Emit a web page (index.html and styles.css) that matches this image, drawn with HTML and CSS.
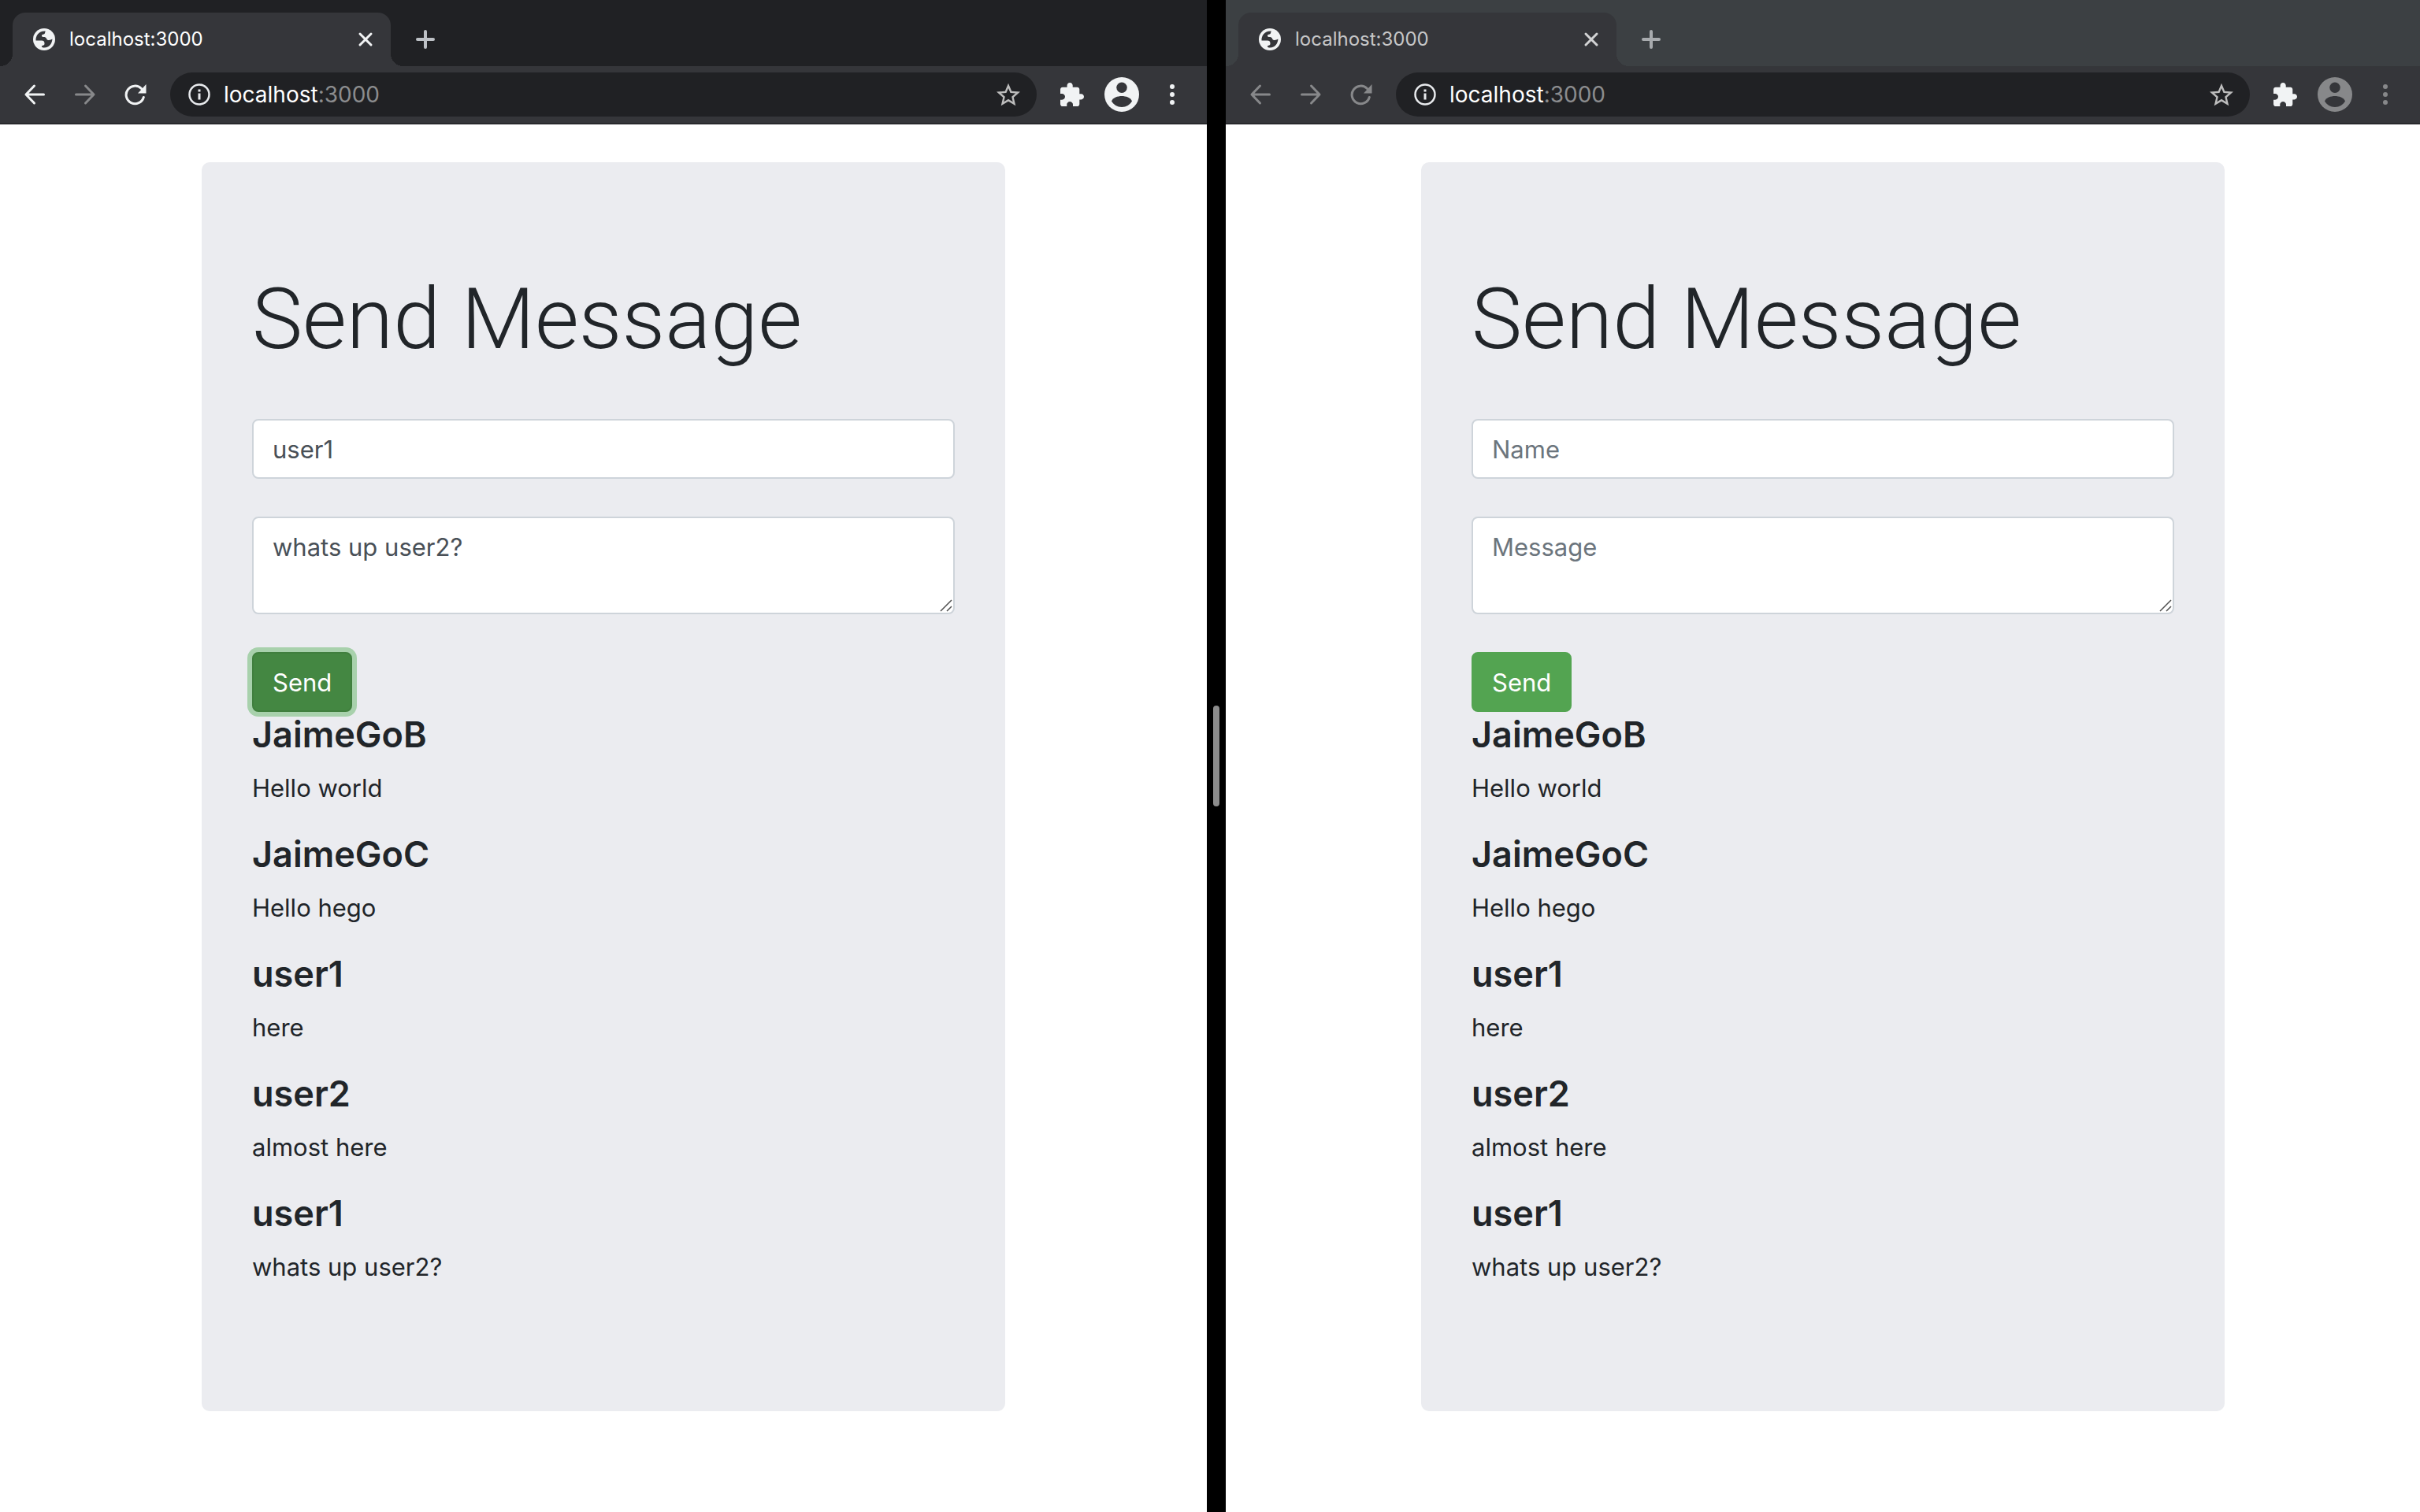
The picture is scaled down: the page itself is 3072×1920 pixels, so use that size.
FILE: index.html
```html
<!DOCTYPE html>
<html lang="en">
<head>
<meta charset="utf-8">
<title>localhost:3000</title>
<link rel="stylesheet" href="styles.css">
</head>
<body>
<svg class="sprite" aria-hidden="true">
  <symbol id="globe" viewBox="0 0 28 28"><circle cx="14" cy="14" r="14" fill="#f1f3f4"/><path fill="#35363a" d="M16 3.500c-1 0-.5 2.500-1.500 3.500-1 1-3 .3-3.500 2-.4 1.500 1 2 2.500 2s3 .4 3.500 2c.4 1.500 1.500 2 3 2 1.700 0 3-1 4.500-1.500C24 19 21 24.500 14 24.500c-1.500 0-2.500-.5-3.200-1.300.2-1.200 1.200-1.500 2.500-1.700 1.200-.3 1.200-1.500 1.200-2.500 0-2.500-1.500-3.500-3.500-3.500H3.500C3 9 8 2.500 16 3.500z"/></symbol>
  <symbol id="close" viewBox="0 0 20 20"><path d="M3 3l14 14M17 3L3 17" fill="none" stroke="currentColor" stroke-width="3" stroke-linecap="round"/></symbol>
  <symbol id="plus" viewBox="0 0 24 24"><path d="M12 2v20M2 12h20" fill="none" stroke="currentColor" stroke-width="4" stroke-linecap="round"/></symbol>
  <symbol id="back" viewBox="0 0 28 28"><path d="M25.500 14H3M13.500 3L3 14l10.500 11" fill="none" stroke="currentColor" stroke-width="3" stroke-linecap="round" stroke-linejoin="round"/></symbol>
  <symbol id="forward" viewBox="0 0 28 28"><path d="M2.500 14H25M14.500 3L25 14 14.500 25" fill="none" stroke="currentColor" stroke-width="3" stroke-linecap="round" stroke-linejoin="round"/></symbol>
  <symbol id="reload" viewBox="0 0 28 28"><path d="M24.300 17.500A11.300 11.300 0 1 1 21.500 6.500" fill="none" stroke="currentColor" stroke-width="3" stroke-linecap="round"/><path d="M27.500 1v11.500H17z" fill="currentColor"/></symbol>
  <symbol id="info" viewBox="0 0 28 28"><circle cx="14" cy="14" r="12.500" fill="none" stroke="currentColor" stroke-width="2.500"/><path d="M12.500 7.500h3v3h-3zM12.500 12.500h3v8h-3z" fill="currentColor"/></symbol>
  <symbol id="star" viewBox="2 2 20 19"><path fill="currentColor" d="M22 9.240l-7.190-.62L12 2 9.190 8.630 2 9.240l5.460 4.730L5.820 21 12 17.270 18.180 21l-1.630-7.030L22 9.240zM12 15.400l-3.760 2.270 1-4.280-3.320-2.880 4.380-.38L12 6.100l1.710 4.040 4.380.38-3.320 2.880 1 4.280L12 15.400z"/></symbol>
  <symbol id="puzzle" viewBox="2 1 21 21"><path fill="currentColor" d="M20.500 11H19V7c0-1.100-.9-2-2-2h-4V3.500C13 2.120 11.880 1 10.500 1S8 2.120 8 3.500V5H4c-1.100 0-1.990.9-1.990 2v3.800H3.500c1.490 0 2.700 1.210 2.700 2.700s-1.210 2.700-2.700 2.700H2V20c0 1.100.9 2 2 2h3.800v-1.500c0-1.490 1.210-2.700 2.700-2.700 1.490 0 2.700 1.210 2.700 2.700V22H17c1.100 0 2-.9 2-2v-4h1.500c1.380 0 2.500-1.120 2.500-2.500S21.880 11 20.500 11z"/></symbol>
  <symbol id="person" viewBox="0 0 44 44"><circle cx="22" cy="22" r="22" fill="currentColor"/><circle cx="22" cy="13.300" r="6.700" fill="#35363a"/><path fill="#35363a" d="M9 30.500C10.500 26 17 24 22 24s11.500 2 13 6.500c-2.500 4.500-7.500 7.500-13 7.500S11.500 35 9 30.500z"/></symbol>
  <symbol id="dots" viewBox="0 0 8 28"><g fill="currentColor"><circle cx="4" cy="4" r="3"/><circle cx="4" cy="14" r="3"/><circle cx="4" cy="24" r="3"/></g></symbol>
  <symbol id="resize" viewBox="0 0 16 16"><path d="M1 15L15 1M9 15l6-6" fill="none" stroke="#505050" stroke-width="1.500"/></symbol>
</svg>
<div class="screen">
  <section class="window" aria-label="First window">
    <header>
      <div class="tabstrip">
        <div class="tab">
          <svg class="i28"><use href="#globe"/></svg>
          <span class="tab-title">localhost:3000</span>
          <button class="icon" aria-label="Close tab"><svg class="i20"><use href="#close"/></svg></button>
        </div>
        <button class="icon new-tab" aria-label="New tab"><svg class="i24"><use href="#plus"/></svg></button>
      </div>
      <nav class="toolbar">
        <div class="nav-buttons">
          <button class="icon" aria-label="Back"><svg class="i28"><use href="#back"/></svg></button>
          <button class="icon off" aria-label="Forward"><svg class="i28"><use href="#forward"/></svg></button>
          <button class="icon" aria-label="Reload"><svg class="i28"><use href="#reload"/></svg></button>
        </div>
        <div class="address">
          <svg class="i28"><use href="#info"/></svg>
          <a class="url" href="#">localhost<span class="port">:3000</span></a>
          <button class="icon star" aria-label="Bookmark"><svg class="i30"><use href="#star"/></svg></button>
        </div>
        <div class="actions">
          <button class="icon" aria-label="Extensions"><svg class="i30"><use href="#puzzle"/></svg></button>
          <button class="icon" aria-label="Profile"><svg class="i44"><use href="#person"/></svg></button>
          <button class="icon" aria-label="Menu"><svg class="menu"><use href="#dots"/></svg></button>
        </div>
      </nav>
    </header>
    <main class="page">
      <div class="card">
        <h1>Send Message</h1>
        <form>
          <input class="field" type="text" aria-label="Name" placeholder="Name" value="user1">
          <div class="area-box">
            <textarea class="field area" aria-label="Message" placeholder="Message">whats up user2?</textarea>
            <svg class="resize"><use href="#resize"/></svg>
          </div>
          <button class="send pressed" type="button">Send</button>
        </form>
        <div class="messages">
          <h4>JaimeGoB</h4><p>Hello world</p>
          <h4>JaimeGoC</h4><p>Hello hego</p>
          <h4>user1</h4><p>here</p>
          <h4>user2</h4><p>almost here</p>
          <h4>user1</h4><p>whats up user2?</p>
        </div>
      </div>
    </main>
  </section>
  <div class="divider"><div class="grip"></div></div>
  <section class="window inactive" aria-label="Second window">
    <header>
      <div class="tabstrip">
        <div class="tab">
          <svg class="i28"><use href="#globe"/></svg>
          <span class="tab-title">localhost:3000</span>
          <button class="icon" aria-label="Close tab"><svg class="i20"><use href="#close"/></svg></button>
        </div>
        <button class="icon new-tab" aria-label="New tab"><svg class="i24"><use href="#plus"/></svg></button>
      </div>
      <nav class="toolbar">
        <div class="nav-buttons">
          <button class="icon off" aria-label="Back"><svg class="i28"><use href="#back"/></svg></button>
          <button class="icon off" aria-label="Forward"><svg class="i28"><use href="#forward"/></svg></button>
          <button class="icon off" aria-label="Reload"><svg class="i28"><use href="#reload"/></svg></button>
        </div>
        <div class="address">
          <svg class="i28"><use href="#info"/></svg>
          <a class="url" href="#">localhost<span class="port">:3000</span></a>
          <button class="icon star" aria-label="Bookmark"><svg class="i30"><use href="#star"/></svg></button>
        </div>
        <div class="actions">
          <button class="icon" aria-label="Extensions"><svg class="i30"><use href="#puzzle"/></svg></button>
          <button class="icon off" aria-label="Profile"><svg class="i44"><use href="#person"/></svg></button>
          <button class="icon off" aria-label="Menu"><svg class="menu"><use href="#dots"/></svg></button>
        </div>
      </nav>
    </header>
    <main class="page">
      <div class="card">
        <h1>Send Message</h1>
        <form>
          <input class="field" type="text" aria-label="Name" placeholder="Name">
          <div class="area-box">
            <textarea class="field area" aria-label="Message" placeholder="Message"></textarea>
            <svg class="resize"><use href="#resize"/></svg>
          </div>
          <button class="send" type="button">Send</button>
        </form>
        <div class="messages">
          <h4>JaimeGoB</h4><p>Hello world</p>
          <h4>JaimeGoC</h4><p>Hello hego</p>
          <h4>user1</h4><p>here</p>
          <h4>user2</h4><p>almost here</p>
          <h4>user1</h4><p>whats up user2?</p>
        </div>
      </div>
    </main>
  </section>
</div>
</body>
</html>
```
FILE: styles.css
```css
* { box-sizing: border-box; }
body {
  margin: 0;
  background: #fff;
  color: #212529;
  font: 31px/48px Inter, "Liberation Sans", sans-serif;
}
.sprite { position: absolute; width: 0; height: 0; }
svg { display: block; flex: none; }
.i20 { width: 20px; height: 20px; }
.i24 { width: 24px; height: 24px; }
.i28 { width: 28px; height: 28px; }
.i30 { width: 30px; height: 30px; }
.i44 { width: 44px; height: 44px; }
.menu { width: 8px; height: 28px; }

.screen {
  display: grid;
  grid-template-columns: 1532fr 24px 1516fr;
  min-height: 100vh;
}
.window { min-width: 0; background: #fff; }
.divider {
  display: flex;
  align-items: center;
  justify-content: center;
  background: #000;
}
.grip { width: 8px; height: 128px; border-radius: 4px; background: #8c8c8c; }

/* Browser chrome */
.icon {
  display: block;
  padding: 0;
  border: 0;
  background: none;
  color: #f1f3f4;
}
.icon.off { color: #87888a; }
.tabstrip {
  display: flex;
  height: 84px;
  padding: 16px 16px 0;
  background: #202124;
}
.tab {
  position: relative;
  display: flex;
  align-items: center;
  width: 480px;
  padding: 0 22px 0 26px;
  border-radius: 16px 16px 0 0;
  background: #35363a;
  color: #fff;
}
.tab::before,
.tab::after {
  content: "";
  position: absolute;
  bottom: 0;
  width: 16px;
  height: 16px;
}
.tab::before { right: 100%; background: radial-gradient(circle at 0 0, transparent 16px, #35363a 16px); }
.tab::after { left: 100%; background: radial-gradient(circle at 100% 0, transparent 16px, #35363a 16px); }
.tab-title { flex: 1; padding-left: 18px; font-size: 24px; line-height: 32px; }
.new-tab { margin-left: 32px; color: #bdc1c6; }
.toolbar {
  display: flex;
  align-items: center;
  height: 74px;
  padding: 0 40px 0 30px;
  border-bottom: 2px solid #28292c;
  background: #35363a;
}
.nav-buttons { display: flex; gap: 36px; }
.address {
  flex: 1;
  display: flex;
  align-items: center;
  height: 56px;
  margin: 0 30px;
  padding: 0 21px 0 23px;
  border-radius: 28px;
  background: #202124;
  color: #e8eaed;
}
.url {
  flex: 1;
  padding-left: 17px;
  color: #fff;
  font-size: 28px;
  line-height: 40px;
  text-decoration: none;
}
.port { color: #8b8c8e; }
.star { color: #bdbdbd; }
.actions { display: flex; align-items: center; }
.actions .icon + .icon { margin-left: 26px; }
.actions .icon:last-child { margin-left: 38px; }
.inactive .tabstrip { background: #3c4043; }
.inactive .tab { color: #c6c7c8; }
.inactive .tab .icon { color: #d2d3d4; }
.inactive .new-tab { color: #a8abae; }

/* Page */
.page { padding: 48px 30px; }
.card {
  max-width: 1020px;
  margin: 0 auto;
  padding: 128px 64px;
  border-radius: 10px;
  background: #ebecf0;
}
h1, h4, p { margin: 0; }
h1 {
  margin-bottom: 56px;
  font-family: Roboto, Inter, sans-serif;
  font-size: 108px;
  font-weight: 300;
  line-height: 142px;
}
form { display: flex; flex-direction: column; align-items: flex-start; gap: 48px; }
.field {
  display: block;
  width: 100%;
  height: 76px;
  margin: 0;
  padding: 12px 24px;
  border: 2px solid #ced4da;
  border-radius: 8px;
  background: #fff;
  color: #495057;
  font: inherit;
}
.field::placeholder { color: #6c757d; opacity: 1; }
.area-box { position: relative; width: 100%; }
.area { height: 124px; padding-top: 13px; resize: none; }
.resize { position: absolute; right: 3px; bottom: 3px; width: 16px; height: 16px; }
.send {
  height: 76px;
  padding: 13px 24px 11px;
  border: 2px solid #53a451;
  border-radius: 8px;
  background: #53a451;
  color: #fff;
  font: inherit;
}
.send.pressed {
  border-color: #407f3e;
  background: #448742;
  box-shadow: 0 0 0 6px #a8d1ac;
}
h4 { margin-bottom: 15px; font-size: 45px; font-weight: 600; line-height: 58px; }
p { margin-bottom: 31px; }
```
